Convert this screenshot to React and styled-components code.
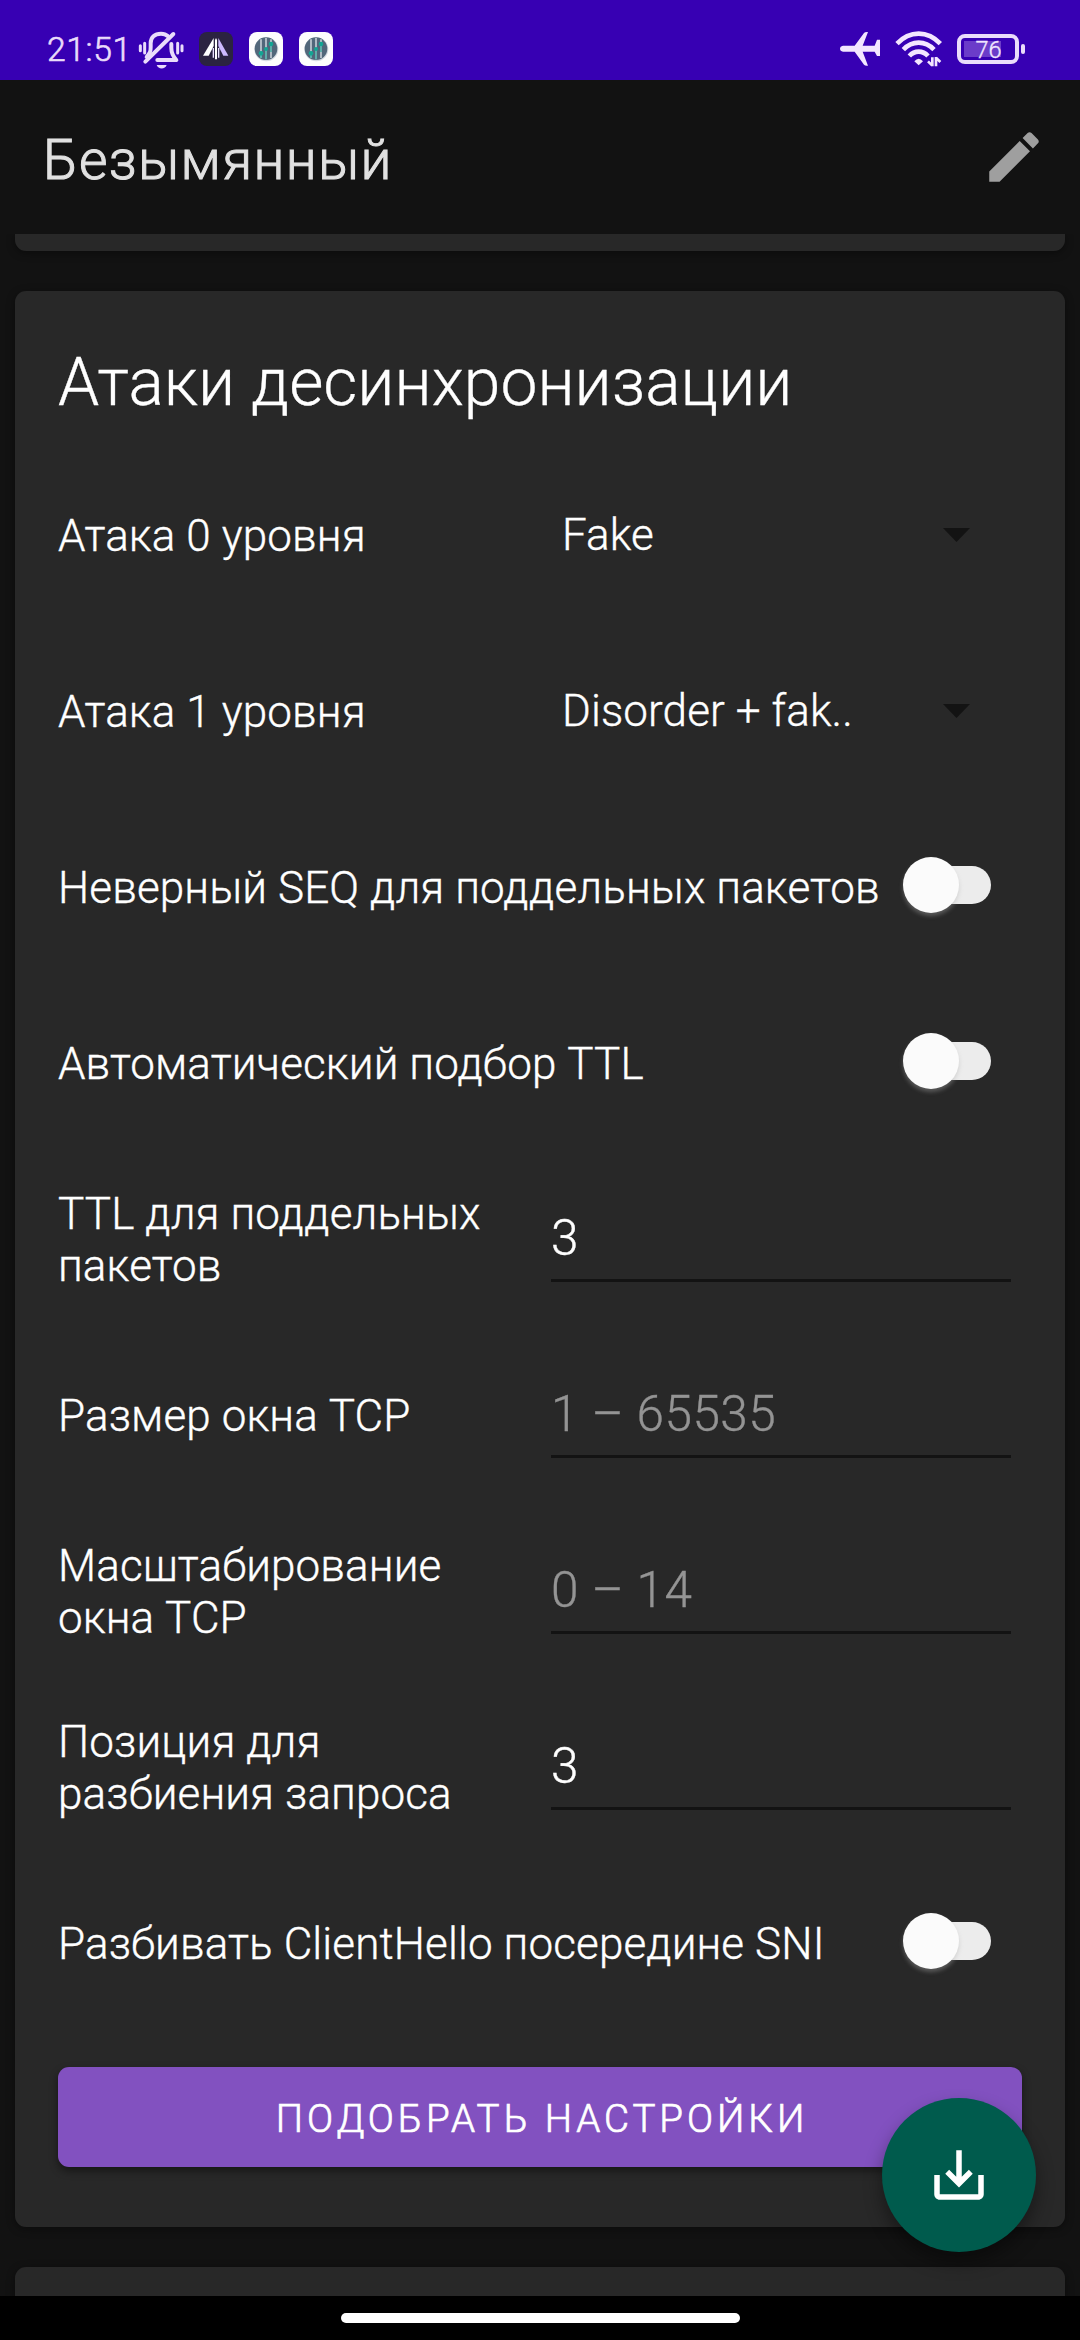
import React from "react";
import styled, { createGlobalStyle } from "styled-components";

const GlobalStyle = createGlobalStyle`
  *, *::before, *::after { box-sizing: border-box; }
  body { margin: 0; background: #121212; }
`;

const Screen = styled.div`
  position: relative;
  display: flex;
  flex-direction: column;
  width: 1080px;
  height: 2340px;
  overflow: hidden;
  background: #121212;
  color: #fff;
  font-family: Roboto, "Noto Sans", sans-serif;
  font-weight: 300;
  -webkit-text-stroke: 0.35px currentColor;
`;

const StatusBar = styled.header`
  display: flex;
  align-items: flex-start;
  flex: none;
  height: 80px;
  padding: 26px 55px 0 47px;
  background: #3700b3;
`;

const Clock = styled.span`
  width: 87px;
  font-size: 33.7px;
  line-height: 48px;
  letter-spacing: 0.6px;
  color: #eadcfb;
  -webkit-text-stroke-width: 0.6px;
`;

const BellIcon = styled.svg`
  flex: none;
  width: 54px;
  height: 46px;
  margin-right: 11px;
`;

const Tiles = styled.div`
  display: flex;
  gap: 16px;
  padding-top: 6px;
`;

const Tile = styled.div`
  width: 34px;
  height: 34px;
  border-radius: 8px;
  overflow: hidden;
  background: ${(p) => p.$color};

  svg { display: block; width: 34px; height: 34px; }
`;

const Indicators = styled.div`
  display: flex;
  margin-left: auto;
`;

const Airplane = styled.svg`
  width: 40px;
  height: 38px;
  margin: 4px 15px 0 0;
`;

const Wifi = styled.svg`
  width: 48px;
  height: 36px;
  margin: 5px 14px 0 0;
`;

const Battery = styled.div`
  display: flex;
  align-items: center;
  gap: 2px;
  height: 30px;
  margin-top: 8px;
`;

const BatteryCase = styled.div`
  display: flex;
  align-items: center;
  justify-content: center;
  width: 62px;
  height: 30px;
  padding: 1px 0 0 1px;
  border: 4px solid #eadcfb;
  border-radius: 8px;
  background: linear-gradient(#6b3cc9, #6b3cc9) 3px 3px / 37px 16px no-repeat;
  background-origin: padding-box;
  font-size: 23.5px;
  line-height: 22px;
  color: #f1e6ff;
`;

const BatteryTip = styled.div`
  width: 4px;
  height: 10px;
  border-radius: 2px;
  background: #eadcfb;
`;

const Toolbar = styled.div`
  display: flex;
  align-items: center;
  justify-content: space-between;
  flex: none;
  height: 154px;
  padding: 0 33px 0 43px;
`;

const ToolbarTitle = styled.h1`
  margin: 0;
  padding-top: 6px;
  font-size: 55px;
  font-weight: 300;
  line-height: 66px;
  letter-spacing: 1.35px;
  color: #e1e1e1;
  -webkit-text-stroke-width: 1px;
`;

const IconButton = styled.button`
  display: flex;
  padding: 0;
  border: 0;
  background: none;
  color: #9f9f9f;

  svg { width: 66px; height: 66px; }
`;

const Content = styled.main`
  display: flex;
  flex-direction: column;
  flex: 1;
  min-height: 0;
  gap: 40px;
  padding: 0 15px;
  overflow: hidden;
`;

const Card = styled.section`
  flex: none;
  padding: 0 43px;
  border-radius: 11px;
  background: #282828;
  box-shadow: 0 2px 8px rgba(0, 0, 0, 0.4);
`;

const CardTail = styled(Card)`
  height: 17px;
  border-radius: 0 0 11px 11px;
`;

const NextCard = styled(Card)`
  height: 80px;
`;

const SettingsCard = styled(Card)`
  height: 1936px;
`;

const CardTitle = styled.h2`
  height: 157px;
  margin: 0;
  padding-top: 53px;
  font-size: 66px;
  font-weight: 300;
  line-height: 78px;
  letter-spacing: 0.02px;
`;

const Row = styled.div`
  display: grid;
  grid-template-columns: ${(p) => (p.$wide ? "1fr auto" : "1fr 1fr")};
  align-items: center;
  height: 176px;
`;

const Label = styled.label`
  font-size: 44px;
  line-height: 52px;
  letter-spacing: 0.12px;
`;

const Spinner = styled.div`
  display: flex;
  align-items: center;
  justify-content: space-between;
  padding: 0 52px 0 22px;
  font-size: 44px;
  line-height: 52px;
  letter-spacing: 0.1px;

  span { padding-bottom: 2px; }
  svg { width: 27px; height: 14px; margin-bottom: 2px; }
`;

const Field = styled.div`
  display: flex;
  align-items: center;
  height: 86px;
  margin: 0 11px 2px;
  border-bottom: 3px solid #131313;
  font-size: 49.5px;
  letter-spacing: 0.45px;
  color: ${(p) => (p.$hint ? "#949494" : "#fff")};
`;

const Track = styled.div`
  display: flex;
  align-items: center;
  width: 84px;
  height: 38px;
  margin: 0 31px 6px 0;
  border-radius: 19px;
  background: #ececec;
`;

const Thumb = styled.div`
  flex: none;
  width: 56px;
  height: 56px;
  margin-left: -4px;
  border-radius: 50%;
  background: #fbfbfb;
  box-shadow: 0 3px 4px rgba(170, 170, 170, 0.4);
`;

const PrimaryButton = styled.button`
  display: block;
  width: 100%;
  height: 100px;
  margin-top: 35px;
  padding: 3px 0 0 4px;
  border: 0;
  border-radius: 11px;
  background: #8251c0;
  box-shadow: 0 4px 8px rgba(0, 0, 0, 0.45);
  font-family: inherit;
  font-size: 38.5px;
  font-weight: 300;
  letter-spacing: 3.95px;
  color: #fff;
  -webkit-text-stroke-width: 0.7px;
`;

const Fab = styled.button`
  position: absolute;
  top: 2098px;
  left: 882px;
  display: flex;
  align-items: center;
  justify-content: center;
  width: 154px;
  height: 154px;
  padding: 0;
  border: 0;
  border-radius: 50%;
  background: #005b4d;
  box-shadow: 0 10px 18px rgba(0, 0, 0, 0.4);
  color: #fff;

  svg { width: 66px; height: 66px; }
`;

const NavBar = styled.footer`
  display: flex;
  justify-content: center;
  flex: none;
  height: 44px;
  padding-top: 17px;
  background: #000;
  position: relative;
`;

const Handle = styled.div`
  width: 399px;
  height: 10px;
  border-radius: 5px;
  background: #fff;
`;

function MutedBell() {
  return (
    <BellIcon viewBox="0 0 162 138" fill="none" stroke="#eadcfb" strokeWidth="12" strokeLinecap="round" strokeLinejoin="round">
      <path d="M38 93C49 79 50 76 50 64V52C50 34 62 23 81 23C89 23 96 25 101 30" />
      <path d="M118 24L34 107" />
      <path d="M112 54V66C112 81 118 92 127 102H70" />
      <path d="M68 117H98C94 131 72 131 68 117Z" fill="#eadcfb" stroke="none" />
      <path d="M19 59V74M32 52V81M131 52V81M144 59V74" strokeWidth="9" />
    </BellIcon>
  );
}

function PeakTile() {
  return (
    <Tile $color="#2b2341">
      <svg viewBox="0 0 102 102">
        <path d="M44 18L12 71H29L44 42Z" fill="#fff" />
        <path d="M58 18L88 71H73L58 42Z" fill="#cdb9ff" />
        <path d="M51 18L54 24V82H48V24Z" fill="#fff" />
        <path d="M43 48V77M59 48V77" stroke="#e8dfff" strokeWidth="4" />
      </svg>
    </Tile>
  );
}

function MixerTile() {
  return (
    <Tile $color="#fdfdfd">
      <svg viewBox="0 0 102 102">
        <circle cx="52" cy="52" r="36" fill="#d6dbe2" />
        <circle cx="51" cy="50" r="34" fill="#52677a" />
        <path d="M36 22V78M51 18V82M66 22V78" stroke="#c3ccd3" strokeWidth="5" />
        <path d="M36 58V78M51 50V82M66 36V60" stroke="#35a79c" strokeWidth="4" />
        <circle cx="36" cy="64" r="7" fill="#12a594" />
        <circle cx="51" cy="51" r="6" fill="#12a594" />
        <circle cx="66" cy="36" r="7" fill="#12a594" />
      </svg>
    </Tile>
  );
}

function SelectRow({ label, value }) {
  return (
    <Row>
      <Label>{label}</Label>
      <Spinner>
        <span>{value}</span>
        <svg viewBox="0 0 27 14"><path d="M0 0H27L13.5 14Z" fill="#131313" /></svg>
      </Spinner>
    </Row>
  );
}

function SwitchRow({ label }) {
  return (
    <Row $wide>
      <Label>{label}</Label>
      <Track><Thumb /></Track>
    </Row>
  );
}

function InputRow({ label, value, hint }) {
  return (
    <Row>
      <Label>{label}</Label>
      <Field $hint={!value}>{value || hint}</Field>
    </Row>
  );
}

export default function App() {
  return (
    <>
      <GlobalStyle />
      <Screen>
        <StatusBar>
          <Clock>21:51</Clock>
          <MutedBell />
          <Tiles>
            <PeakTile />
            <MixerTile />
            <MixerTile />
          </Tiles>
          <Indicators>
            <Airplane viewBox="0 0 120 114" fill="#f3e6ff">
              <path d="M9 47H44L72 9Q75 5 84 6L68 47H104L111 29H120V78H111L104 65H68L84 107Q75 108 72 104L44 65H9Q0 63 0 56Q0 49 9 47Z" />
            </Airplane>
            <Wifi viewBox="0 0 144 108" fill="none" stroke="#f3e6ff" strokeWidth="14">
              <path d="M6 38Q35 8 71 8Q107 8 136 38" />
              <path d="M25 56Q45 35 71 35Q97 35 117 56" />
              <path d="M43 75Q55 62 71 62Q87 62 99 75" />
              <path d="M58 91Q71 76 84 91L71 103Z" fill="#f3e6ff" stroke="none" />
              <path d="M112 79V106M112 104L99 91M123 106V78M123 80L136 93" strokeWidth="8" />
            </Wifi>
            <Battery>
              <BatteryCase>76</BatteryCase>
              <BatteryTip />
            </Battery>
          </Indicators>
        </StatusBar>

        <Toolbar>
          <ToolbarTitle>Безымянный</ToolbarTitle>
          <IconButton aria-label="Переименовать">
            <svg viewBox="0 0 24 24" fill="currentColor">
              <path d="M3 17.25V21h3.75L17.81 9.94l-3.75-3.75L3 17.25zM20.71 7.04c.39-.39.39-1.02 0-1.41l-2.34-2.34c-.39-.39-1.02-.39-1.41 0l-1.83 1.83 3.75 3.75 1.83-1.83z" />
            </svg>
          </IconButton>
        </Toolbar>

        <Content>
          <CardTail />
          <SettingsCard>
            <CardTitle>Атаки десинхронизации</CardTitle>
            <SelectRow label="Атака 0 уровня" value="Fake" />
            <SelectRow label="Атака 1 уровня" value="Disorder + fak.." />
            <SwitchRow label="Неверный SEQ для поддельных пакетов" />
            <SwitchRow label="Автоматический подбор TTL" />
            <InputRow label="TTL для поддельных пакетов" value="3" />
            <InputRow label="Размер окна TCP" hint="1 – 65535" />
            <InputRow label="Масштабирование окна TCP" hint="0 – 14" />
            <InputRow label="Позиция для разбиения запроса" value="3" />
            <SwitchRow label="Разбивать ClientHello посередине SNI" />
            <PrimaryButton>ПОДОБРАТЬ НАСТРОЙКИ</PrimaryButton>
          </SettingsCard>
          <NextCard />
        </Content>

        <Fab aria-label="Сохранить">
          <svg viewBox="0 0 24 24" fill="currentColor">
            <path d="M19 12v7H5v-7H3v7c0 1.1.9 2 2 2h14c1.1 0 2-.9 2-2v-7h-2zm-6 .67l2.59-2.58L17 11.5l-5 5-5-5 1.41-1.41L11 12.67V3h2v9.67z" />
          </svg>
        </Fab>
        <NavBar><Handle /></NavBar>
      </Screen>
    </>
  );
}
